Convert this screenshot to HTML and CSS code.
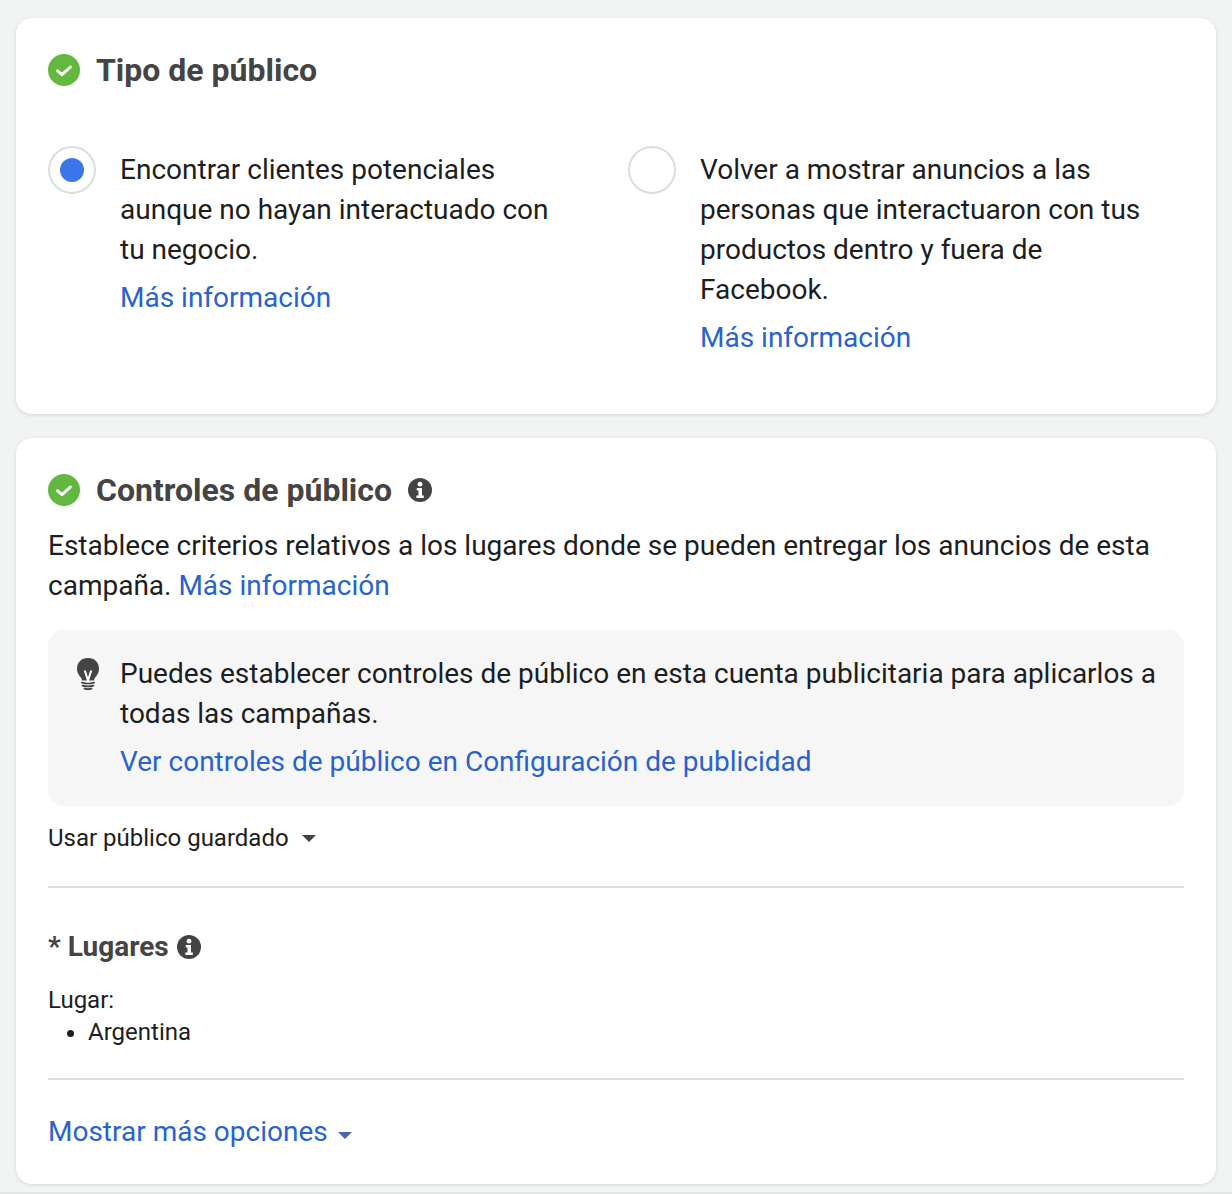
FILE: index.html
```html
<!DOCTYPE html>
<html lang="es">
<head>
<meta charset="utf-8">
<title>Público</title>
<link rel="stylesheet" href="styles.css">
</head>
<body>
<main class="page">
  <section class="card card-type">
    <div class="heading">
      <svg class="check" viewBox="0 0 32 32"><circle cx="16" cy="16" r="16" fill="#63b83f"/><path d="M9.600 16.800l4.400 3.800 8.400-7.600" fill="none" stroke="#fff" stroke-width="3" stroke-linecap="round" stroke-linejoin="round"/></svg>
      <h2>Tipo de público</h2>
    </div>
    <div class="options">
      <div class="option">
        <span class="radio radio-on"></span>
        <div class="option-text">
          <p>Encontrar clientes potenciales<br>aunque no hayan interactuado con<br>tu negocio.</p>
          <a class="link block-link" href="#">Más información</a>
        </div>
      </div>
      <div class="option">
        <span class="radio"></span>
        <div class="option-text">
          <p>Volver a mostrar anuncios a las<br>personas que interactuaron con tus<br>productos dentro y fuera de<br>Facebook.</p>
          <a class="link block-link" href="#">Más información</a>
        </div>
      </div>
    </div>
  </section>
  <section class="card card-controls">
    <div class="heading">
      <svg class="check" viewBox="0 0 32 32"><circle cx="16" cy="16" r="16" fill="#63b83f"/><path d="M9.600 16.800l4.400 3.800 8.400-7.600" fill="none" stroke="#fff" stroke-width="3" stroke-linecap="round" stroke-linejoin="round"/></svg>
      <h2>Controles de público</h2>
      <svg class="info info-head" viewBox="0 0 24 24"><circle cx="12" cy="12" r="12" fill="#444"/><circle cx="12" cy="6.200" r="2.400" fill="#fff"/><path d="M8.800 10h5.200v7.400h1.800v2.600H8.400v-2.600h2.100v-4.800H8.800z" fill="#fff"/></svg>
    </div>
    <p class="intro">Establece criterios relativos a los lugares donde se pueden entregar los anuncios de esta campaña. <a class="link" href="#">Más información</a></p>
    <div class="tip">
      <svg class="bulb" viewBox="0 0 24 32"><path d="M12 0C5 0 1 4.800 1 10.800c0 3.400 1.500 5.800 3.200 8 1 1.300 1.700 2.400 2 3.700h11.600c.3-1.300 1-2.400 2-3.700 1.700-2.200 3.200-4.600 3.200-8C23 4.800 19 0 12 0z" fill="#444"/><path d="M8.800 12.500l3.200 10 3.200-10" fill="none" stroke="#fff" stroke-width="2"/><path d="M6 24.600q6 1.800 12 0M6.500 27.600q5.500 1.600 11 0M8.500 30.600q3.500 1 7 0" fill="none" stroke="#444" stroke-width="1.700" stroke-linecap="round"/></svg>
      <div class="tip-text">
        <p>Puedes establecer controles de público en esta cuenta publicitaria para aplicarlos a todas las campañas.</p>
        <a class="link block-link" href="#">Ver controles de público en Configuración de publicidad</a>
      </div>
    </div>
    <div class="saved">Usar público guardado <span class="caret caret-dark"></span></div>
    <hr class="rule">
    <div class="places-head">
      <h3>* Lugares</h3>
      <svg class="info" viewBox="0 0 24 24"><circle cx="12" cy="12" r="12" fill="#444"/><circle cx="12" cy="6.200" r="2.400" fill="#fff"/><path d="M8.800 10h5.200v7.400h1.800v2.600H8.400v-2.600h2.100v-4.800H8.800z" fill="#fff"/></svg>
    </div>
    <div class="places">
      <div>Lugar:</div>
      <ul><li>Argentina</li></ul>
    </div>
    <hr class="rule">
    <a class="link more" href="#">Mostrar más opciones<span class="caret caret-blue"></span></a>
  </section>
</main>
<div class="edge"></div>
</body>
</html>
```
FILE: styles.css
```css
* { box-sizing: border-box; }
html, body { margin: 0; height: 1194px; overflow: hidden; }
body {
  background: #f2f4f3;
  font-family: Roboto, "Liberation Sans", sans-serif;
  font-size: 28px;
  line-height: 40px;
  color: #1c1e21;
  display: flex;
  flex-direction: column;
}
.page { display: flex; flex-direction: column; gap: 24px; padding: 18px 16px 0; height: 1192px; }
.edge { height: 2px; background: #e4e6e6; }
.card {
  background: #fff;
  border-radius: 16px;
  box-shadow: 0 1px 4px rgba(0, 0, 0, .12);
  padding: 32px;
}
.card-type { height: 396px; }
.card-controls { height: 746px; }
.heading { display: flex; align-items: center; height: 40px; }
.check { width: 32px; height: 32px; margin-right: 16px; flex: none; }
h2 { margin: 0; font-size: 32px; line-height: 40px; font-weight: 700; color: #444; }
h3 { margin: 0; font-size: 28px; line-height: 40px; font-weight: 700; color: #444; }
p { margin: 0; }
.link { color: #2a62cf; text-decoration: none; }
.block-link { display: block; margin-top: 8px; }
.options { display: flex; margin-top: 56px; }
.option { display: flex; flex: none; width: 580px; gap: 24px; }
.radio {
  flex: none;
  width: 48px;
  height: 48px;
  border-radius: 50%;
  border: 2px solid #dadde1;
  background: #fff;
  display: flex;
  align-items: center;
  justify-content: center;
}
.radio-on::after { content: ""; width: 24px; height: 24px; border-radius: 50%; background: #3b76ec; }
.option-text { padding-top: 4px; }
.info { width: 24px; height: 24px; flex: none; margin-left: 8px; }
.info-head { margin-left: 16px; }
.intro { margin-top: 16px; }
.tip {
  display: flex;
  gap: 20px;
  margin-top: 24px;
  padding: 24px 28px;
  background: #f6f6f6;
  border-radius: 16px;
  height: 176px;
}
.bulb { width: 24px; height: 32px; flex: none; margin-top: 4px; }
.saved { font-size: 24px; line-height: 32px; margin-top: 16px; display: flex; align-items: center; gap: 13px; }
.caret { display: inline-block; width: 0; height: 0; border-style: solid; border-width: 7px 7px 0; border-color: #444 transparent transparent; }
.caret-blue { border-color: #4a66b5 transparent transparent; margin-left: 10px; vertical-align: 2px; }
.rule { border: 0; height: 2px; background: #dadde1; margin: 0; }
.card-controls > .rule:first-of-type { margin-top: 32px; }
.places-head { display: flex; align-items: center; margin-top: 39px; }
.places { font-size: 24px; line-height: 32px; margin-top: 17px; }
.places ul { margin: 0; padding-left: 40px; }
.places + .rule { margin-top: 30px; }
.more { display: block; margin-top: 32px; }
```
